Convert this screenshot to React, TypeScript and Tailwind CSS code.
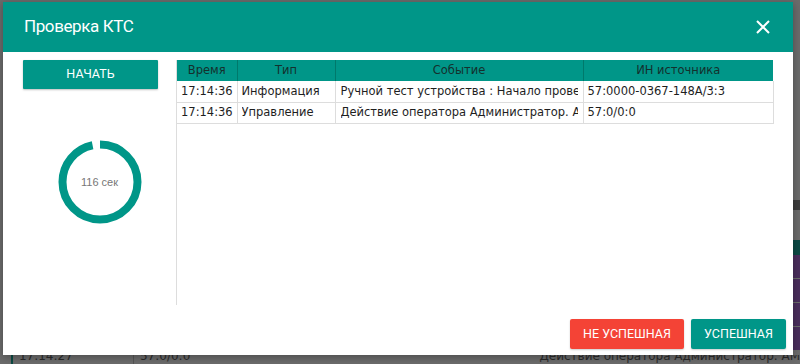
import React from 'react'

const rows = [
  {
    time: '17:14:36',
    type: 'Информация',
    event: 'Ручной тест устройства : Начало проверки КТС',
    source: '57:0000-0367-148A/3:3',
  },
  {
    time: '17:14:36',
    type: 'Управление',
    event: 'Действие оператора Администратор. Аварийная кнопка',
    source: '57:0/0:0',
  },
]

function Countdown({ seconds, total }: { seconds: number; total: number }) {
  const r = 37.5
  const c = 2 * Math.PI * r
  const done = (seconds / total) * c
  return (
    <div className="relative w-[84px] h-[84px]">
      <svg width="84" height="84" viewBox="0 0 84 84">
        <circle
          cx="42"
          cy="42"
          r={r}
          fill="none"
          stroke="#009688"
          strokeWidth="8"
          strokeDasharray={`${done} ${c}`}
          transform="rotate(-90 42 42)"
        />
      </svg>
      <div className="absolute inset-0 flex items-center justify-center text-[11px] text-[#777] font-['Liberation_Sans',sans-serif]">
        {seconds} сек
      </div>
    </div>
  )
}

export default function App() {
  return (
    <div className="relative w-[800px] h-[364px] overflow-hidden bg-[#6b6b6b] font-['DejaVu_Sans',sans-serif]">
      {/* dimmed page behind the dialog */}
      <div className="flex flex-col h-full">
        <div className="flex flex-1">
          <div className="flex-1" />
          <div className="w-[8px] flex flex-col">
            <div className="h-[200px]" />
            <div className="h-[10px] bg-[#3c3c3c]" />
            <div className="h-[30px]" />
            <div className="h-[15px] bg-[#0c4a44]" />
            <div className="flex flex-col gap-px">
              {[0, 1, 2, 3].map((i) => (
                <div key={i} className="h-[23px] bg-[#4a2d5c]" />
              ))}
            </div>
          </div>
        </div>
        <div className="h-[9px] overflow-hidden flex items-start text-[12px] leading-[14px] text-[#2a2a2a]">
          <div className="w-[2px] h-full bg-[#0a4a43] ml-[11px]" />
          <span className="ml-[6px] w-[120px] -mt-[6px]">17:14:27</span>
          <div className="w-px h-full bg-[#555]" />
          <span className="ml-[6px] w-[420px] -mt-[6px]">57:0/0:0</span>
          <span className="-mt-[6px] whitespace-nowrap">Действие оператора Администратор. АМ</span>
        </div>
      </div>

      {/* dialog */}
      <div className="absolute left-[3px] top-[2px] w-[790px] h-[353px] bg-white flex flex-col shadow-[0_2px_8px_rgba(0,0,0,0.3)]">
        <div className="h-[50px] bg-[#009688] flex items-center justify-between pl-[21px] pr-[23px] shrink-0">
          <span className="text-white text-[17px] tracking-[-0.4px] font-['Roboto',sans-serif]">Проверка КТС</span>
          <svg width="14" height="14" viewBox="0 0 14 14">
            <path d="M1 1 L13 13 M13 1 L1 13" stroke="white" strokeWidth="2" />
          </svg>
        </div>

        <div className="flex flex-1 pt-[8px]">
          <div className="ml-[20px] w-[153px] flex flex-col">
            <button className="w-[135px] h-[29px] bg-[#009688] text-white text-[12.5px] font-['Roboto',sans-serif] uppercase shadow-[0_1px_2px_rgba(0,0,0,0.25)] rounded-[1px]">
              Начать
            </button>
            <div className="flex justify-center mt-[51px]">
              <Countdown seconds={116} total={120} />
            </div>
          </div>

          <div className="w-[597px] h-[245px] border-l border-[#ddd]">
            <table className="w-[596px] table-fixed border-collapse text-[11.5px] text-[#1e1e1e]">
              <colgroup>
                <col className="w-[60px]" />
                <col className="w-[98px]" />
                <col className="w-[248px]" />
                <col className="w-[190px]" />
              </colgroup>
              <thead>
                <tr className="h-[21px] bg-[#009688]">
                  {['Время', 'Тип', 'Событие', 'ИН источника'].map((h, i) => (
                    <th
                      key={h}
                      className={`font-normal text-center text-[#14302d] ${i > 0 ? 'border-l border-[#00796b]' : ''}`}
                    >
                      {h}
                    </th>
                  ))}
                </tr>
              </thead>
              <tbody>
                {rows.map((r, i) => (
                  <tr key={i} className="h-[21px]">
                    <td className="border-r border-b border-[#ddd] px-[4px]">
                      <div className="whitespace-nowrap overflow-hidden">{r.time}</div>
                    </td>
                    <td className="border-r border-b border-[#ddd] px-[4px]">
                      <div className="whitespace-nowrap overflow-hidden">{r.type}</div>
                    </td>
                    <td className="border-r border-b border-[#ddd] px-[5px]">
                      <div className="whitespace-nowrap overflow-hidden">{r.event}</div>
                    </td>
                    <td className="border-r border-b border-[#ddd] px-[4px]">
                      <div className="whitespace-nowrap overflow-hidden">{r.source}</div>
                    </td>
                  </tr>
                ))}
              </tbody>
            </table>
          </div>
        </div>

        <div className="flex justify-end gap-[7px] pr-[7px] pb-[6px] shrink-0">
          <button className="w-[114px] h-[30px] bg-[#f44336] text-white text-[12.5px] font-['Roboto',sans-serif] rounded-[2px] shadow-[0_1px_2px_rgba(0,0,0,0.2)]">
            НЕ УСПЕШНАЯ
          </button>
          <button className="w-[95px] h-[30px] bg-[#009688] text-white text-[12.5px] font-['Roboto',sans-serif] rounded-[2px] shadow-[0_1px_2px_rgba(0,0,0,0.2)]">
            УСПЕШНАЯ
          </button>
        </div>
      </div>
    </div>
  )
}
